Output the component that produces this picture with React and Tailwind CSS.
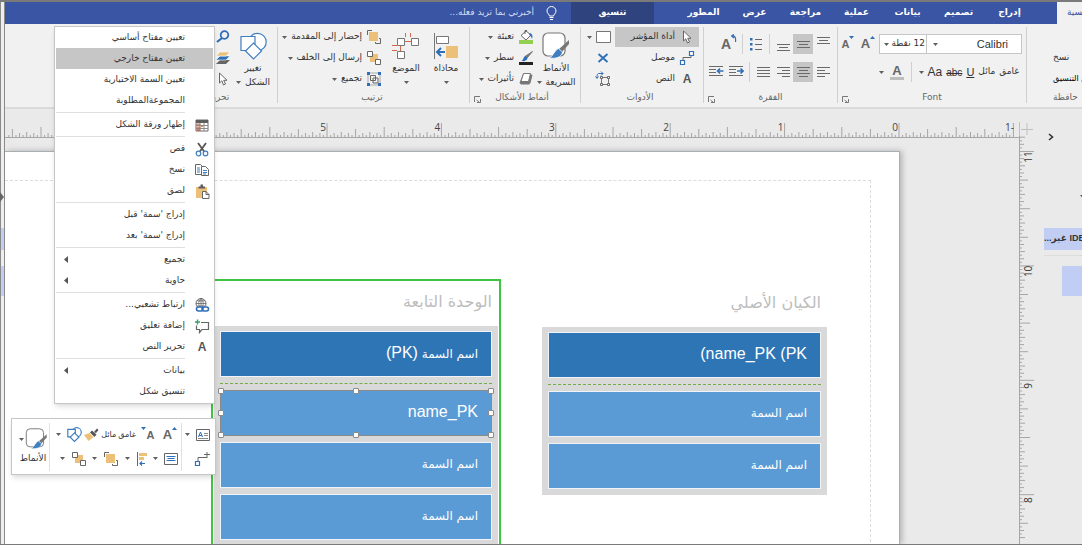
import React from "react";

const TABS = ["إدراج", "تصميم", "بيانات", "عملية", "مراجعة", "عرض", "المطور"];

const MENU = [
    [
        { label: "تعيين مفتاح أساسي" },
        { label: "تعيين مفتاح خارجي", active: true },
        { label: "تعيين السمة الاختيارية" },
        { label: "المجموعةالمطلوبة" },
    ],
    [{ label: "إظهار ورقة الشكل", icon: <SheetIcon /> }],
    [
        { label: "قص", icon: <CutIcon /> },
        { label: "نسخ", icon: <CopyIcon /> },
        { label: "لصق", icon: <PasteIcon /> },
    ],
    [{ label: "إدراج 'سمة' قبل" }, { label: "إدراج 'سمة' بعد" }],
    [{ label: "تجميع", sub: true }, { label: "حاوية", sub: true }],
    [
        { label: "ارتباط تشعبي...", icon: <LinkIcon /> },
        { label: "إضافة تعليق", icon: <CommentIcon /> },
        { label: "تحرير النص", icon: <LetterA /> },
    ],
    [{ label: "بيانات", sub: true }, { label: "تنسيق شكل" }],
];

/* ---------- icons ---------- */

function Icon({ w = 16, h = 16, children }) {
    return (
        <svg width={w} height={h} viewBox={`0 0 ${w} ${h}`} fill="none" className="shrink-0" aria-hidden="true">
            {children}
        </svg>
    );
}

function Caret() {
    return (
        <Icon w={5} h={3}>
            <path d="M0 0h5L2.500 3z" fill="#5f5f5f" />
        </Icon>
    );
}

function LetterA() {
    return <span className="w-4 text-center font-['Liberation_Sans'] text-[12px] leading-4 font-bold text-[#555]">A</span>;
}

function SheetIcon() {
    return (
        <Icon>
            <path d="M2 3h12v11H2z" fill="#fff" stroke="#6a6a6a" />
            <path d="M2 3h12v3H2z" fill="#5d5d5d" />
            <path d="M2 8.500h12M2 11.500h12M6 6v8M10 6v8" stroke="#8a8a8a" />
            <path d="M3 7h3v1H3zM3 10h3v1H3zM3 12.500h3v1H3zM7 9.500h2" stroke="#d2603a" strokeWidth=".8" />
        </Icon>
    );
}

function CutIcon() {
    return (
        <Icon>
            <path d="M4 2l6.500 9M12 2L5.500 11" stroke="#555" strokeWidth="1.800" />
            <circle cx="4.500" cy="12.500" r="2.300" stroke="#3f7fc1" strokeWidth="1.200" />
            <circle cx="11.500" cy="12.500" r="2.300" stroke="#3f7fc1" strokeWidth="1.200" />
        </Icon>
    );
}

function CopyIcon() {
    return (
        <Icon>
            <path d="M1.500 2.500h5l2 2v8h-7z" fill="#fff" stroke="#666" />
            <path d="M3 6h3M3 8h3M3 10h3" stroke="#3f7fc1" />
            <path d="M7.500 4.500h4l3 3v6h-7z" fill="#fff" stroke="#666" />
            <path d="M9 8.500h4M9 10.500h4M9 12h3" stroke="#3f7fc1" />
        </Icon>
    );
}

function PasteIcon() {
    return (
        <Icon>
            <path d="M2 4h11v11H2z" fill="#ecc078" />
            <path d="M4.500 5.500v-2h2V1.500h2.500v2h2v2z" fill="#5d5d5d" />
            <path d="M8.500 8.500h3.500l3 3v4H8.500z" fill="#fff" stroke="#666" />
            <path d="M12 8.500v3h3" stroke="#666" />
        </Icon>
    );
}

function LinkIcon() {
    return (
        <Icon>
            <circle cx="7" cy="6.500" r="5" stroke="#666" />
            <path d="M2 6.500h10M3 3.800h8M3 9h8M7 1.500v10M7 1.500c-3 3-3 7 0 10M7 1.500c3 3 3 7 0 10" stroke="#666" strokeWidth=".8" />
            <rect x="2.500" y="10" width="6.500" height="4" rx="2" fill="#fff" stroke="#2f6fb7" strokeWidth="1.600" />
            <rect x="8" y="10" width="6.500" height="4" rx="2" stroke="#2f6fb7" strokeWidth="1.600" />
        </Icon>
    );
}

function CommentIcon() {
    return (
        <Icon>
            <path d="M7 4.500h7.500v7H8l-2.500 3v-3h-3v-4" stroke="#666" strokeWidth="1.200" />
            <path d="M3.500 1.500v5M1 4h5" stroke="#3aa06a" strokeWidth="1.400" />
        </Icon>
    );
}

function ChangeShapeIcon({ small }) {
    return (
        <svg width={small ? 15 : 27} height={small ? 15 : 28} viewBox="0 0 27 28" fill="none" strokeWidth={small ? 2.200 : 1.200} aria-hidden="true">
            <circle cx="17.500" cy="10" r="8.700" fill="#fff" stroke="#3f7fc1" />
            <path d="M1 4.500h14v14H1z" fill="#fff" stroke="#3f7fc1" />
            <path d="M13.500 11l8 8-8 8-8-8z" fill="#fff" stroke="#3f7fc1" />
        </svg>
    );
}

function SearchIcon() {
    return (
        <Icon w={14} h={14}>
            <circle cx="8.500" cy="5" r="3.800" stroke="#2f6fb7" strokeWidth="1.800" />
            <path d="M6 8l-5 4" stroke="#2f6fb7" strokeWidth="2.200" />
        </Icon>
    );
}

function LayersIcon() {
    return (
        <Icon w={14} h={14}>
            <path d="M4 9h10l-4 4H0z" fill="#666" />
            <path d="M4 5h10l-4 4H0z" fill="#2f6fb7" stroke="#fff" strokeWidth=".6" />
            <path d="M4 1h10l-4 4H0z" fill="#ecc078" stroke="#fff" strokeWidth=".6" />
        </Icon>
    );
}

function PointerIcon() {
    return (
        <Icon w={10} h={14}>
            <path d="M1.500 1v10l2.300-2.200L5.500 13l2-1-1.800-3.700H9z" fill="#fff" stroke="#666" strokeLinejoin="round" />
        </Icon>
    );
}

function FrontIcon() {
    return (
        <Icon>
            <path d="M1.500 6V1.500H6" stroke="#666" />
            <path d="M3 3h9v9H3z" fill="#ecc078" />
            <path d="M13 9.500h1.500v5h-5V13" stroke="#666" />
        </Icon>
    );
}

function BackIcon() {
    return (
        <Icon>
            <path d="M4 4h8v8H4z" fill="#ecc078" />
            <path d="M1.500 1.500h5v5h-5zM9.500 9.500h5v5h-5z" fill="#fff" stroke="#666" />
        </Icon>
    );
}

function GroupIcon() {
    return (
        <Icon>
            <path d="M2 2h12v12H2z" stroke="#aaa" />
            <path d="M4.500 4.500h5v5h-5zM7 7h5v5H7z" stroke="#666" />
            <path d="M1 1h3v3H1zM12 1h3v3h-3zM1 12h3v3H1zM12 12h3v3h-3z" fill="#2f6fb7" />
        </Icon>
    );
}

function PositionIcon() {
    return (
        <Icon w={28} h={27}>
            <path d="M13.500 0v4M18.500 0v4M12.500 8.500h7M0 12.500h5M8.500 12v6M0 17.500h5" stroke="#d2694d" />
            <path d="M5.500 5.500h7v7h-7zM19.500 5.500h7v7h-7zM5.500 18.500h7v7h-7z" fill="#fff" stroke="#777" />
        </Icon>
    );
}

function AlignIcon() {
    return (
        <Icon w={26} h={26}>
            <path d="M1.500 0v26" stroke="#777" />
            <path d="M3.500 3.500h12v7h-12z" fill="#fff" stroke="#777" />
            <path d="M13 13h12v12H13z" fill="#ecc078" />
            <path d="M12 19H4.500M8 15l-4 4 4 4" stroke="#2f6fb7" strokeWidth="2" />
        </Icon>
    );
}

function FillIcon() {
    return (
        <Icon>
            <path d="M3 6.500l5-4.500 5 4-5 5z" fill="#fff" stroke="#666" />
            <path d="M7 5V1.500h2" stroke="#666" />
            <path d="M12 4c2.500 1 3 3 2 6-.6-2-1.500-3.500-3-4z" fill="#2f6fb7" />
            <path d="M1 11h14v4H1z" fill="#92d050" />
        </Icon>
    );
}

function LineIcon() {
    return (
        <Icon>
            <path d="M14.500 1.500L9 8l-2-1.500z" fill="#777" stroke="#777" />
            <path d="M7 6l2.500 2c0 2.500-3 3.500-6 3 2-.8 1.500-3.500 3.500-5z" fill="#2f6fb7" />
            <path d="M1 12h14v3H1z" fill="#222" />
        </Icon>
    );
}

function EffectsIcon() {
    return (
        <Icon>
            <path d="M5 3h7.500l2 1-2 8-1.500 1.500H3L1.500 12z" fill="#777" />
            <path d="M5.500 2.500h7l-2 8h-7.500z" fill="#fff" stroke="#777" />
        </Icon>
    );
}

function StylesIcon({ small }) {
    return (
        <svg width={small ? 23 : 28} height={small ? 22 : 28} viewBox="0 0 28 28" fill="none" aria-hidden="true">
            <rect x="1" y="1" width="22" height="23" rx="5" fill="#fff" stroke="#777" strokeWidth="1.200" />
            <path d="M27 8v4l-7 8-3-3z" fill="#777" />
            <path d="M16.500 16.500l4 3.500c-1 5-6 7-13 6 4-2 5-8 9-9.500z" fill="#3f7fc1" stroke="#fff" strokeWidth=".7" />
        </svg>
    );
}

function ConnectorIcon() {
    return (
        <Icon>
            <path d="M4 10V7.500h8V5" stroke="#666" />
            <path d="M1.500 10.500h4v4h-4zM10.500 1.500h4v4h-4z" fill="#fff" stroke="#2f6fb7" strokeWidth="1.200" />
        </Icon>
    );
}

function ConnectorPlusIcon() {
    return (
        <Icon>
            <path d="M4 10V6.500h9M13 1v6M10 3.500h6" stroke="#666" />
            <path d="M1.500 10.500h4v4h-4z" fill="#fff" stroke="#2f6fb7" strokeWidth="1.200" />
        </Icon>
    );
}

function RectIcon() {
    return (
        <Icon w={15} h={12}>
            <path d="M.5 .5h14v11H.5z" fill="#fff" stroke="#777" />
        </Icon>
    );
}

function CrossIcon() {
    return (
        <Icon w={12} h={12}>
            <path d="M1.500 2l9 8M10.500 2l-9 8" stroke="#2f6fb7" strokeWidth="1.800" />
        </Icon>
    );
}

function PointsIcon() {
    return (
        <Icon w={16} h={16}>
            <path d="M6.500 6.500h7v7h-7z" stroke="#777" />
            <path d="M5.500 5.500h2v2h-2zM12.500 5.500h2v2h-2zM5.500 12.500h2v2h-2zM12.500 12.500h2v2h-2z" fill="#fff" stroke="#666" />
            <path d="M8 2.500H4c-1.500 0-2 1-2 4.500M6 .5l2 2-2 2M.5 5.500L2 7.500l1.500-2" stroke="#2f6fb7" />
        </Icon>
    );
}

function BulletsIcon() {
    return (
        <Icon w={14} h={14}>
            <path d="M1 1h2.500v2.500H1zM1 6h2.500v2.500H1zM1 11h2.500v2.500H1z" fill="#2f6fb7" />
            <path d="M6 2.500h7M6 7.500h7M6 12.500h7" stroke="#666" />
        </Icon>
    );
}

// rows of text, shortened on the side given by `kind`
function LinesIcon({ kind }) {
    const d = {
        top: "M0 .5h13M2 3.500h9M0 6.500h13",
        middle: "M0 4.500h13M2 7.500h9M0 10.500h13",
        bottom: "M0 7.500h13M2 10.500h9M0 13.500h13",
        left: "M0 2.500h13M0 5.500h8M0 8.500h13M0 11.500h8",
        center: "M0 2.500h13M2 5.500h9M0 8.500h13M2 11.500h9",
        right: "M0 2.500h13M5 5.500h8M0 8.500h13M5 11.500h8",
        justify: "M0 2.500h13M0 5.500h13M0 8.500h13M0 11.500h13",
    }[kind];
    return (
        <Icon w={13} h={14}>
            <path d={d} stroke="#6a6a6a" />
        </Icon>
    );
}

function IndentIcon({ flip }) {
    return (
        <Icon w={15} h={14}>
            <path d="M0 1.500h14M0 4.500h7M0 7.500h7M0 10.500h14" stroke="#6a6a6a" />
            {flip
                ? <path d="M14.500 6H9M11 3.500L8.500 6 11 8.500" stroke="#2f6fb7" strokeWidth="1.600" />
                : <path d="M8 6h5.500M11.500 3.500L14 6l-2.500 2.500" stroke="#2f6fb7" strokeWidth="1.600" />}
        </Icon>
    );
}

function RotateTextIcon() {
    return (
        <span dir="ltr" className="flex items-start">
            <span className="font-['Liberation_Sans'] text-[14px] leading-5 font-bold text-[#666]">A</span>
            <Icon w={6} h={9}>
                <path d="M1 2c3-.5 4 1.500 3.500 6M3 .5L.5 2 3 4" stroke="#2f6fb7" strokeWidth="1.200" />
            </Icon>
        </span>
    );
}

function SizeA({ up, flip }) {
    return (
        <span dir={flip ? "rtl" : "ltr"} className="flex w-5 items-start justify-center">
            <span className={`font-['Liberation_Sans'] leading-4 font-bold text-[#666] ${up ? "text-[13px]" : "text-[11px]"}`}>A</span>
            <Icon w={5} h={4}>
                <path d={up ? "M0 3h5L2.500 0z" : "M0 0h5L2.500 3z"} fill="#2f6fb7" />
            </Icon>
        </span>
    );
}

function BulbIcon() {
    return (
        <Icon w={11} h={15}>
            <path d="M3.500 10c0-1.500-2.500-2.500-2.500-5a4.500 4.500 0 019 0c0 2.500-2.500 3.500-2.500 5zM3.500 11.500h4M4 13.500h3" stroke="#fff" />
        </Icon>
    );
}

function LauncherIcon() {
    return (
        <Icon w={7} h={7}>
            <path d="M.5 6V.5H6M2.500 4l3 2.500M3 6.500h3.500V3" stroke="#777" />
        </Icon>
    );
}

function TextBoxIcon() {
    return (
        <Icon w={14} h={12}>
            <path d="M.5.5h13v11H.5z" fill="#fff" stroke="#666" />
            <path d="M2.500 8L4.500 3l2 5M3 6.500h3" stroke="#2f6fb7" />
            <path d="M8 4.500h4M8 6.500h4M2 9.500h10" stroke="#888" />
        </Icon>
    );
}

function TextLinesIcon() {
    return (
        <Icon w={14} h={12}>
            <path d="M.5.5h13v11H.5z" fill="#fff" stroke="#666" />
            <path d="M2.500 3.500h9M3.500 5.500h7M2.500 7.500h9" stroke="#2f6fb7" />
        </Icon>
    );
}

function SmallAlignIcon() {
    return (
        <Icon w={12} h={14}>
            <path d="M1.500 0v14" stroke="#666" />
            <path d="M3 1h8v3H3zM3 5h5v3H3z" fill="#ecc078" />
            <path d="M9 11.500H4M6 9.500l-2 2 2 2" stroke="#2f6fb7" strokeWidth="1.200" />
        </Icon>
    );
}

function BrushIcon() {
    return (
        <Icon w={15} h={14}>
            <path d="M5.500 5l4 4-5 4L0 7z" fill="#ecc078" />
            <path d="M6 4.500l2-2 4.500 4L10.500 9z" fill="#555" />
            <path d="M10 4l3-3.500 1.500 1.500L12 5z" fill="#555" />
        </Icon>
    );
}

/* ---------- ribbon ---------- */

function Group({ title, launcher, className, children }) {
    return (
        <section className={`flex shrink-0 flex-col justify-between border-l border-[#d0d0d0] ${className}`}>
            <div className="flex">{children}</div>
            <div className="relative flex h-[10px] items-center justify-center text-[#666]">
                {title}
                {launcher && (
                    <button aria-label={`خيارات ${title}`} className="absolute bottom-0 left-1">
                        <LauncherIcon />
                    </button>
                )}
            </div>
        </section>
    );
}

function Row({ icon, label, caret, active }) {
    return (
        <button className={`flex h-5 items-center gap-1 px-1 whitespace-nowrap ${active ? "bg-[#c6c6c6]" : ""}`}>
            <span className="flex w-4 justify-center">{icon}</span>
            <span className="flex items-center gap-1">
                {label}
                {caret && <Caret />}
            </span>
        </button>
    );
}

function BigButton({ icon, lines, className }) {
    return (
        <button className={`flex shrink-0 flex-col items-center pt-1 leading-[14px] ${className}`}>
            <span className="flex h-[30px] items-center">{icon}</span>
            <span>{lines[0]}</span>
            <span className="flex h-[14px] items-center gap-1">
                {lines[1]}
                <Caret />
            </span>
        </button>
    );
}

function Tool({ label, active, children }) {
    return (
        <button aria-label={label} className={`flex h-5 w-5 items-center justify-center ${active ? "bg-[#c6c6c6]" : ""}`}>
            {children}
        </button>
    );
}

function Divider() {
    return <span className="mx-[3px] h-5 w-px bg-[#d0d0d0]" />;
}

function TabBar() {
    return (
        <nav className="flex h-[22px] shrink-0 items-stretch overflow-hidden bg-[#3955a3] text-white">
            <a href="#home" className="flex w-[25px] shrink-0 items-center justify-end overflow-hidden bg-[#f1f1f1] pl-[10px] text-[#3955a3]">
                <span className="shrink-0">الرئيسية</span>
            </a>
            <div className="mr-[22px] ml-6 flex">
                {TABS.map((tab) => (
                    <a key={tab} href="#tab" className="flex w-[51px] items-center justify-center font-bold">{tab}</a>
                ))}
            </div>
            <a href="#format" className="flex w-[83px] items-center justify-center bg-[#2f437f] font-bold">تنسيق</a>
            <button className="mr-[14px] flex items-center gap-3 text-[#d5dcf0]">
                <BulbIcon />
                أخبرني بما تريد فعله...
            </button>
        </nav>
    );
}

function Ribbon() {
    return (
        <div className="flex h-[85px] shrink-0 overflow-hidden border-b-2 border-[#dadada] bg-[#f1f1f1] pt-[3px] pb-1 text-[#333]">
            <section className="flex w-14 shrink-0 flex-col items-end justify-between overflow-hidden border-l border-[#d0d0d0] pl-[26px]">
                <div className="flex flex-col items-end gap-px pt-[21px]">
                    <button className="h-5 whitespace-nowrap">نسخ</button>
                    <button className="h-5 text-[8px] whitespace-nowrap text-black">ع التنسيق</button>
                </div>
                <span className="flex h-[10px] items-center text-[#666]">حافظة</span>
            </section>

            <Group title="Font" launcher className="w-[189px]">
                <div className="flex flex-col gap-2 pt-[7px] pr-1">
                    <div className="flex h-5 items-center">
                        <div className="flex h-5 w-[96px] items-center border border-[#c6c6c6] bg-white pl-[6px]">
                            <select aria-label="الخط" className="min-w-0 flex-1 appearance-none bg-transparent pr-[13px] font-['Liberation_Sans'] text-[11px]">
                                <option>Calibri</option>
                            </select>
                            <Caret />
                        </div>
                        <div className="flex h-5 w-[47px] items-center border border-r-0 border-[#c6c6c6] bg-white pl-1">
                            <select aria-label="حجم الخط" className="min-w-0 flex-1 appearance-none bg-transparent pr-px">
                                <option>12 نقطة</option>
                            </select>
                            <Caret />
                        </div>
                        <button aria-label="تكبير الخط" className="mr-px"><SizeA up /></button>
                        <button aria-label="تصغير الخط"><SizeA /></button>
                    </div>
                    <div className="flex h-5 items-center gap-1 pr-[3px] font-['Liberation_Sans','DejaVu_Sans',sans-serif]">
                        <button className="text-[9px]">غامق</button>
                        <button className="text-[9px]">مائل</button>
                        <button className="text-[11px] underline">U</button>
                        <button className="text-[10px] line-through">abc</button>
                        <button className="flex items-center gap-1 text-[12px]">Aa <Caret /></button>
                        <Divider />
                        <button aria-label="لون الخط" className="flex items-center gap-[6px]">
                            <span className="border-b-[3px] border-[#bdbdbd] px-[2px] text-[13px] leading-[13px] font-bold text-[#666]">A</span>
                            <Caret />
                        </button>
                    </div>
                </div>
            </Group>

            <Group title="الفقرة" launcher className="w-[134px]">
                <div className="flex flex-col gap-2 pt-[7px] pr-1">
                    <div className="flex items-center">
                        <Tool label="محاذاة لأعلى"><LinesIcon kind="top" /></Tool>
                        <Tool label="محاذاة للوسط" active><LinesIcon kind="middle" /></Tool>
                        <Tool label="محاذاة لأسفل"><LinesIcon kind="bottom" /></Tool>
                        <Divider />
                        <Tool label="تعداد نقطي"><BulletsIcon /></Tool>
                        <Divider />
                        <Tool label="استدارة النص"><RotateTextIcon /></Tool>
                    </div>
                    <div className="flex items-center">
                        <Tool label="محاذاة لليسار"><LinesIcon kind="left" /></Tool>
                        <Tool label="توسيط" active><LinesIcon kind="center" /></Tool>
                        <Tool label="محاذاة لليمين"><LinesIcon kind="right" /></Tool>
                        <Tool label="ضبط"><LinesIcon kind="justify" /></Tool>
                        <Divider />
                        <Tool label="زيادة المسافة البادئة"><IndentIcon /></Tool>
                        <Tool label="إنقاص المسافة البادئة"><IndentIcon flip /></Tool>
                    </div>
                </div>
            </Group>

            <Group title="الأدوات" className="w-[123px] pr-1">
                <div className="flex w-[84px] flex-col gap-px">
                    <Row icon={<PointerIcon />} label="أداة المؤشر" active />
                    <Row icon={<ConnectorIcon />} label="موصل" />
                    <Row icon={<LetterA />} label="النص" />
                </div>
                <div className="mr-1 flex flex-col gap-px">
                    <button aria-label="مستطيل" className="flex h-5 items-center gap-1"><RectIcon /><Caret /></button>
                    <button aria-label="نقطة اتصال" className="flex h-5 w-4 items-center justify-center"><CrossIcon /></button>
                    <button aria-label="نقاط" className="flex h-5 w-4 items-center justify-center"><PointsIcon /></button>
                </div>
            </Group>

            <Group title="أنماط الأشكال" launcher className="w-[111px] pr-[6px]">
                <BigButton icon={<StylesIcon />} lines={["الأنماط", "السريعة"]} className="w-9 whitespace-nowrap" />
                <div className="flex flex-col gap-px">
                    <Row icon={<FillIcon />} label="تعبئة" caret />
                    <Row icon={<LineIcon />} label="سطر" caret />
                    <Row icon={<EffectsIcon />} label="تأثيرات" caret />
                </div>
            </Group>

            <Group title="ترتيب" className="w-[192px] pr-[3px]">
                <BigButton icon={<AlignIcon />} lines={["محاذاة"]} className="w-[40px]" />
                <BigButton icon={<PositionIcon />} lines={["الموضع"]} className="w-[40px]" />
                <div className="flex flex-col gap-px">
                    <Row icon={<FrontIcon />} label="إحضار إلى المقدمة" caret />
                    <Row icon={<BackIcon />} label="إرسال إلى الخلف" caret />
                    <Row icon={<GroupIcon />} label="تجميع" caret />
                </div>
            </Group>

            <Group title="تحرير" className="w-[112px] border-l-0 pr-1">
                <BigButton icon={<ChangeShapeIcon />} lines={["تغيير", "الشكل"]} className="w-[40px]" />
                <div className="flex flex-col gap-px">
                    <Tool label="بحث"><SearchIcon /></Tool>
                    <Tool label="طبقات"><LayersIcon /></Tool>
                    <Tool label="تحديد"><PointerIcon /></Tool>
                </div>
            </Group>
        </div>
    );
}

/* ---------- drawing area ---------- */

const INCH = 114.4;

function useWindowSize() {
    const [size, setSize] = React.useState([window.innerWidth, window.innerHeight]);

    React.useEffect(() => {
        const onResize = () => setSize([window.innerWidth, window.innerHeight]);
        window.addEventListener("resize", onResize);
        return () => window.removeEventListener("resize", onResize);
    }, []);

    return size;
}

function range(from, to) {
    return Array.from({ length: Math.max(0, to - from) }, (_, n) => n + from);
}

function tickLength(i) {
    if (i % 32 === 0) return 14;
    if (i % 16 === 0) return 10;
    if (i % 8 === 0) return 8;
    if (i % 4 === 0) return 5;
    return i % 2 === 0 ? 4 : 2;
}

function TopRuler() {
    const [windowWidth] = useWindowSize();
    const width = windowWidth - 68;
    const zero = width - 120;
    const inches = zero / INCH;
    return (
        <svg width={width} height="17" className="shrink-0" aria-hidden="true">
            <path d={range(-32, Math.floor(inches * 32)).map((i) => `M${(zero - (i * INCH) / 32).toFixed(1)} 15v-${tickLength(i)}`).join("")} stroke="#a6a6a6" />
            <path d={`M0 15.500H${width}`} stroke="#a6a6a6" />
            {range(-1, Math.ceil(inches)).map((m) => (
                <text key={m} x={zero - m * INCH - 4} y="9" textAnchor="middle" fontSize="10" fill="#444" direction="ltr" className="font-['Open_Sans']">{m < 0 ? "1-" : m}</text>
            ))}
        </svg>
    );
}

function SideRuler() {
    const [, windowHeight] = useWindowSize();
    const height = windowHeight - 137;
    const inches = (height - 16) / INCH;
    return (
        <div className="flex shrink-0 flex-col overflow-hidden pt-[13px]">
            <Icon w={15} h={14}>
                <path d="M.5 0v14M8 1v12M2 7.500h12" stroke="#c0c0c0" />
            </Icon>
            <svg width="15" height={height} className="shrink-0" aria-hidden="true">
                <path d={`M.5 0V${height}`} stroke="#a6a6a6" />
                <path d={range(-4, Math.floor(inches * 32)).map((i) => `M1 ${(15.5 + (i * INCH) / 32).toFixed(1)}h${tickLength(i)}`).join("")} stroke="#a6a6a6" />
                {range(0, Math.ceil(inches)).map((m) => (
                    <text key={m} transform={`translate(13 ${21 + m * INCH}) rotate(-90)`} textAnchor="middle" fontSize="10" fill="#333" direction="ltr" className="font-['Open_Sans']">{11 - m}</text>
                ))}
            </svg>
        </div>
    );
}

function Handle({ className }) {
    return <span className={`absolute h-[6px] w-[6px] rounded-[1px] border border-[#8a8a8a] bg-white ${className}`} />;
}

function Attribute({ children, pk, selected }) {
    return (
        <div className={`relative flex h-[46px] items-center border pr-[13px] pb-[3px] text-[12px] text-white ${pk ? "bg-[#2e75b6]" : "bg-[#5b9bd5]"} ${selected ? "border-[#8a8a8a]" : "border-[#eef4fa]"}`}>
            <span className="whitespace-nowrap">{children}</span>
            {selected && (
                <>
                    <Handle className="-top-[3px] -left-[3px]" />
                    <Handle className="-top-[3px] left-1/2 -ml-[3px]" />
                    <Handle className="-top-[3px] -right-[3px]" />
                    <Handle className="top-1/2 -left-[3px] -mt-[3px]" />
                    <Handle className="top-1/2 -right-[3px] -mt-[3px]" />
                    <Handle className="-bottom-[3px] -left-[3px]" />
                    <Handle className="-bottom-[3px] left-1/2 -ml-[3px]" />
                    <Handle className="-right-[3px] -bottom-[3px]" />
                </>
            )}
        </div>
    );
}

function Latin({ children }) {
    return <bdi dir="ltr" className="font-['Liberation_Sans'] text-[16px]">{children}</bdi>;
}

function Entity({ title, pk, children }) {
    return (
        <div>
            <h2 className="flex h-[45px] items-center pr-[6px] pb-[3px] text-[16px] text-[#bdbdbd]">{title}</h2>
            <div className="flex flex-col gap-[6px] bg-[#d9d9d9] p-[6px] pt-[5px]">
                <Attribute pk>{pk}</Attribute>
                <div className="border-t border-dashed border-[#70ad47]" />
                {children}
            </div>
        </div>
    );
}

function Canvas() {
    return (
        <div className="flex min-w-0 flex-1 flex-col overflow-hidden pt-[13px]">
            <div className="flex shrink-0 overflow-hidden">
                <TopRuler />
            </div>
            <div className="flex flex-1 pt-3 pr-[119px]">
                <div className="relative flex-1 border-t border-r border-[#a9b0b4] bg-white shadow-[2px_0_6px_rgba(0,0,0,0.25)]">
                    <div className="mt-7 mr-7 h-full border-t border-r border-dashed border-[#dcdcdc]" />
                    <div className="absolute top-[130px] right-[72px] w-[285px]">
                        <Entity title="الكيان الأصلي" pk={<Latin>(name_PK (PK</Latin>}>
                            <Attribute>اسم السمة</Attribute>
                            <Attribute>اسم السمة</Attribute>
                        </Entity>
                    </div>
                    <div className="absolute top-[127px] right-[398px] w-[290px] border-2 border-[#3fc43f] bg-white px-px">
                        <Entity title="الوحدة التابعة" pk={<>اسم السمة <Latin>(PK)</Latin></>}>
                            <Attribute selected><Latin>name_PK</Latin></Attribute>
                            <Attribute>اسم السمة</Attribute>
                            <Attribute>اسم السمة</Attribute>
                        </Entity>
                    </div>
                </div>
            </div>
        </div>
    );
}

function ShapesPanel() {
    return (
        <aside className="flex w-12 shrink-0 flex-col items-start overflow-hidden pt-[24px] text-[#333]">
            <button aria-label="توسيع" className="mr-[28px]">
                <Icon w={6} h={8}>
                    <path d="M1 1l3.500 3L1 7" stroke="#333" strokeWidth="1.600" />
                </Icon>
            </button>
            <div className="mt-[54px] -mr-[3px] h-[3px]">
                <Caret />
            </div>
            <div className="mt-[30px] flex h-[22px] w-[38px] items-center justify-end bg-[#c1cdf2] font-['Liberation_Sans','DejaVu_Sans',sans-serif] font-bold whitespace-nowrap">
                <span className="shrink-0">IDE غير...</span>
            </div>
            <div className="mt-[5px] h-px w-[38px] bg-[#dcdcdc]" />
            <div className="mt-[10px] h-[30px] w-5 bg-[#c1cdf2]" />
        </aside>
    );
}

/* ---------- floating menus ---------- */

function ContextMenu() {
    return (
        <div role="menu" className="absolute top-6 left-[54px] w-[161px] border border-[#c6c6c6] bg-white px-px pb-px text-[#333] shadow-md">
            {MENU.map((section, n) => (
                <div key={n}>
                    {n > 0 && <div className="my-px mr-7 h-px bg-[#dfdfe3]" />}
                    {section.map((item) => (
                        <button
                            key={item.label}
                            role="menuitem"
                            className={`flex h-[21px] w-full items-center pr-[3px] pl-2 whitespace-nowrap ${item.active ? "bg-[#c6c6c6]" : ""}`}
                        >
                            <span className="ml-[9px] flex w-4 shrink-0 justify-center">{item.icon}</span>
                            <span className="flex-1 text-right">{item.label}</span>
                            {item.sub && (
                                <Icon w={4} h={7}>
                                    <path d="M4 0v7L0 3.500z" fill="#555" />
                                </Icon>
                            )}
                        </button>
                    ))}
                </div>
            ))}
        </div>
    );
}

function MiniTool({ label, caret, children }) {
    return (
        <button aria-label={label} className="flex h-6 items-center gap-[6px]">
            {children}
            {caret && <Caret />}
        </button>
    );
}

function MiniToolbar() {
    return (
        <div role="toolbar" className="absolute top-[416px] left-[11px] flex h-[57px] w-[205px] items-center border border-[#c6c6c6] bg-white px-[5px] text-[#333] shadow-md">
            <div className="flex w-7 flex-col">
                <MiniTool label="مربع نص" caret><TextBoxIcon /></MiniTool>
                <MiniTool label="موصل"><ConnectorPlusIcon /></MiniTool>
            </div>
            <span className="h-12 w-px bg-[#e0e0e0]" />
            <div className="flex flex-1 flex-col pr-px pl-[6px]">
                <div className="flex items-center justify-between">
                    <MiniTool label="تكبير الخط"><SizeA up /></MiniTool>
                    <MiniTool label="تصغير الخط"><SizeA flip /></MiniTool>
                    <button className="text-[8px]">غامق</button>
                    <button className="text-[8px]">مائل</button>
                    <MiniTool label="نسخ التنسيق"><BrushIcon /></MiniTool>
                    <MiniTool label="تغيير الشكل" caret><ChangeShapeIcon small /></MiniTool>
                </div>
                <div className="flex items-center justify-between pr-[2px] pl-1">
                    <MiniTool label="محاذاة النص" caret><TextLinesIcon /></MiniTool>
                    <MiniTool label="محاذاة" caret><SmallAlignIcon /></MiniTool>
                    <MiniTool label="إحضار إلى المقدمة" caret><FrontIcon /></MiniTool>
                    <MiniTool label="إرسال إلى الخلف" caret><BackIcon /></MiniTool>
                </div>
            </div>
            <span className="h-12 w-px bg-[#e0e0e0]" />
            <button className="flex w-8 flex-col items-center gap-px">
                <span className="flex items-center gap-px"><StylesIcon small /><Caret /></span>
                <span className="leading-[14px]">الأنماط</span>
            </button>
        </div>
    );
}

function LeftStrip() {
    return (
        <div className="flex w-[5px] shrink-0 flex-col border-x border-[#8a8a8a] bg-[#eeeeee]">
            <div className="mt-[190px]">
                <Icon w={4} h={10}>
                    <path d="M0 0l4 5-4 5z" fill="#666" />
                </Icon>
            </div>
            <div className="mt-[26px] h-[22px] bg-[#c1cdf2]" />
            <div className="mt-4 h-[30px] bg-[#c1cdf2]" />
        </div>
    );
}

export default function App() {
    return (
        <div dir="rtl" className="relative flex h-screen w-full overflow-hidden border-t-2 border-b border-[#7a7a7a] bg-[#eaeaea] font-['DejaVu_Sans',sans-serif] text-[9px]">
            <div className="flex min-w-0 flex-1 flex-col">
                <TabBar />
                <Ribbon />
                <div className="flex min-h-0 flex-1">
                    <ShapesPanel />
                    <SideRuler />
                    <Canvas />
                </div>
            </div>
            <LeftStrip />
            <ContextMenu />
            <MiniToolbar />
        </div>
    );
}
